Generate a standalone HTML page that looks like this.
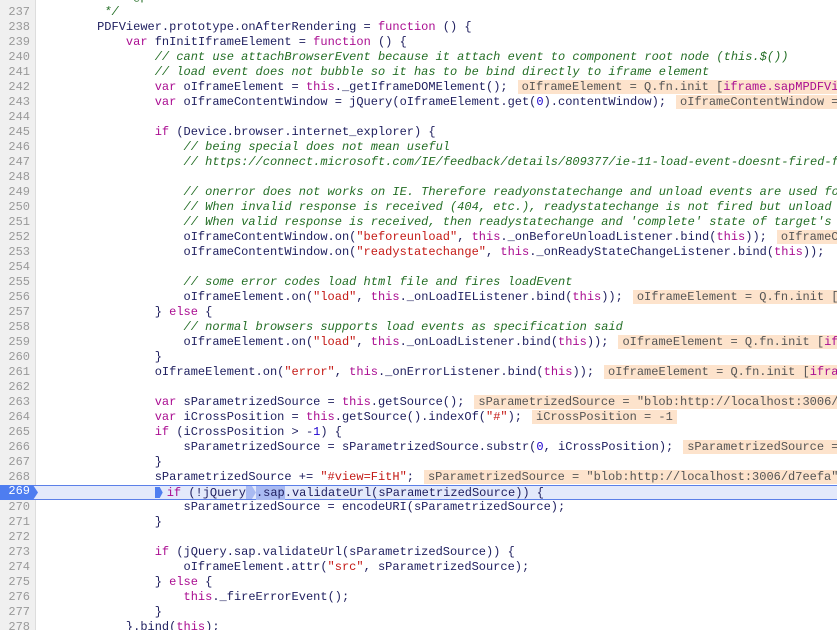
<!DOCTYPE html>
<html><head><meta charset="utf-8"><style>
html,body{margin:0;padding:0;width:837px;height:628px;overflow:hidden;background:#fff}
#ed{position:absolute;top:-10px;left:0;width:837px;height:640px;overflow:hidden}
.l{position:relative;height:15px;line-height:15px;font:12px "Liberation Mono",monospace;white-space:pre;color:#202060;overflow:hidden}
.g{position:absolute;left:0;top:0;width:36px;height:15px;background:#f0f0f0;border-right:1px solid #ddd;color:#999;text-align:right;box-sizing:border-box;padding-right:5px}
.t{position:absolute;left:39.5px;top:0}
.k{color:#aa0d91}.s{color:#c41a16}.n{color:#1c00cf}.c{color:#236e25;font-style:italic}
.v{background:#fde3cc;color:#555;padding:0 4px;margin-left:10px}
.cur{background:#e3e9fb;border-top:1px solid #5b7fe8;border-bottom:1px solid #5b7fe8;height:13px;line-height:13px;overflow:visible}
.cur .g{background:#f0f0f0;height:13px}
.arrow{position:absolute;left:0;top:-1px;width:38px;height:15px;background:#4e7df0;color:#fff;text-align:right;padding-right:8px;box-sizing:border-box;clip-path:polygon(0 0,33px 0,38px 50%,33px 100%,0 100%)}
.m{display:inline-block;width:8px;height:11px;background:#4e7df0;vertical-align:-2px;clip-path:polygon(0 0,5px 0,8px 50%,5px 100%,0 100%);margin-right:4px}
.m2{display:inline-block;width:10px;height:13px;background:#a9baf2;vertical-align:-3px;clip-path:polygon(0 0,6px 0,10px 50%,6px 100%,0 100%)}
.hl{background:#a9baf2}
</style></head><body><div id="ed">
<div class="l"><span class="g">236</span><span class="t">           <span style="color:#236e25">* @private</span></span></div>
<div class="l"><span class="g">237</span><span class="t c">         */</span></div>
<div class="l"><span class="g">238</span><span class="t">        PDFViewer.prototype.onAfterRendering = <span class="k">function</span> () {</span></div>
<div class="l"><span class="g">239</span><span class="t">            <span class="k">var</span> fnInitIframeElement = <span class="k">function</span> () {</span></div>
<div class="l"><span class="g">240</span><span class="t">                <span class="c">// cant use attachBrowserEvent because it attach event to component root node (this.$())</span></span></div>
<div class="l"><span class="g">241</span><span class="t">                <span class="c">// load event does not bubble so it has to be bind directly to iframe element</span></span></div>
<div class="l"><span class="g">242</span><span class="t">                <span class="k">var</span> oIframeElement = <span class="k">this</span>._getIframeDOMElement();<span class="v">oIframeElement = Q.fn.init [<span class="k">iframe.sapMPDFViewerContent</span>]</span></span></div>
<div class="l"><span class="g">243</span><span class="t">                <span class="k">var</span> oIframeContentWindow = jQuery(oIframeElement.get(<span class="n">0</span>).contentWindow);<span class="v">oIframeContentWindow = Window</span></span></div>
<div class="l"><span class="g">244</span><span class="t"></span></div>
<div class="l"><span class="g">245</span><span class="t">                <span class="k">if</span> (Device.browser.internet_explorer) {</span></div>
<div class="l"><span class="g">246</span><span class="t">                    <span class="c">// being special does not mean useful</span></span></div>
<div class="l"><span class="g">247</span><span class="t">                    <span class="c">// https://connect.microsoft.com/IE/feedback/details/809377/ie-11-load-event-doesnt-fired-for-pdf-in-iframe</span></span></div>
<div class="l"><span class="g">248</span><span class="t"></span></div>
<div class="l"><span class="g">249</span><span class="t">                    <span class="c">// onerror does not works on IE. Therefore readyonstatechange and unload events are used for error detection.</span></span></div>
<div class="l"><span class="g">250</span><span class="t">                    <span class="c">// When invalid response is received (404, etc.), readystatechange is not fired but unload is.</span></span></div>
<div class="l"><span class="g">251</span><span class="t">                    <span class="c">// When valid response is received, then readystatechange and 'complete' state of target's document is fired</span></span></div>
<div class="l"><span class="g">252</span><span class="t">                    oIframeContentWindow.on(<span class="s">"beforeunload"</span>, <span class="k">this</span>._onBeforeUnloadListener.bind(<span class="k">this</span>));<span class="v">oIframeContentWindow = Window</span></span></div>
<div class="l"><span class="g">253</span><span class="t">                    oIframeContentWindow.on(<span class="s">"readystatechange"</span>, <span class="k">this</span>._onReadyStateChangeListener.bind(<span class="k">this</span>));</span></div>
<div class="l"><span class="g">254</span><span class="t"></span></div>
<div class="l"><span class="g">255</span><span class="t">                    <span class="c">// some error codes load html file and fires loadEvent</span></span></div>
<div class="l"><span class="g">256</span><span class="t">                    oIframeElement.on(<span class="s">"load"</span>, <span class="k">this</span>._onLoadIEListener.bind(<span class="k">this</span>));<span class="v">oIframeElement = Q.fn.init [<span class="k">iframe.sapMPDFViewerContent</span>]</span></span></div>
<div class="l"><span class="g">257</span><span class="t">                } <span class="k">else</span> {</span></div>
<div class="l"><span class="g">258</span><span class="t">                    <span class="c">// normal browsers supports load events as specification said</span></span></div>
<div class="l"><span class="g">259</span><span class="t">                    oIframeElement.on(<span class="s">"load"</span>, <span class="k">this</span>._onLoadListener.bind(<span class="k">this</span>));<span class="v">oIframeElement = Q.fn.init [<span class="k">iframe.sapMPDFViewerContent</span>]</span></span></div>
<div class="l"><span class="g">260</span><span class="t">                }</span></div>
<div class="l"><span class="g">261</span><span class="t">                oIframeElement.on(<span class="s">"error"</span>, <span class="k">this</span>._onErrorListener.bind(<span class="k">this</span>));<span class="v">oIframeElement = Q.fn.init [<span class="k">iframe.sapMPDFViewerContent</span>]</span></span></div>
<div class="l"><span class="g">262</span><span class="t"></span></div>
<div class="l"><span class="g">263</span><span class="t">                <span class="k">var</span> sParametrizedSource = <span class="k">this</span>.getSource();<span class="v">sParametrizedSource = "blob:http://localhost:3006/d7eefa"</span></span></div>
<div class="l"><span class="g">264</span><span class="t">                <span class="k">var</span> iCrossPosition = <span class="k">this</span>.getSource().indexOf(<span class="s">"#"</span>);<span class="v">iCrossPosition = -1</span></span></div>
<div class="l"><span class="g">265</span><span class="t">                <span class="k">if</span> (iCrossPosition &gt; -<span class="n">1</span>) {</span></div>
<div class="l"><span class="g">266</span><span class="t">                    sParametrizedSource = sParametrizedSource.substr(<span class="n">0</span>, iCrossPosition);<span class="v">sParametrizedSource = "blob:http://localhost"</span></span></div>
<div class="l"><span class="g">267</span><span class="t">                }</span></div>
<div class="l"><span class="g">268</span><span class="t">                sParametrizedSource += <span class="s">"#view=FitH"</span>;<span class="v">sParametrizedSource = "blob:http://localhost:3006/d7eefa"</span></span></div>
<div class="l cur"><span class="arrow">269</span><span class="t" style="top:0">                <span class="m"></span><span class="k">if</span> (!jQuery<span class="m2"></span><span class="hl">.sap</span>.validateUrl(sParametrizedSource)) {</span></div>
<div class="l"><span class="g">270</span><span class="t">                    sParametrizedSource = encodeURI(sParametrizedSource);</span></div>
<div class="l"><span class="g">271</span><span class="t">                }</span></div>
<div class="l"><span class="g">272</span><span class="t"></span></div>
<div class="l"><span class="g">273</span><span class="t">                <span class="k">if</span> (jQuery.sap.validateUrl(sParametrizedSource)) {</span></div>
<div class="l"><span class="g">274</span><span class="t">                    oIframeElement.attr(<span class="s">"src"</span>, sParametrizedSource);</span></div>
<div class="l"><span class="g">275</span><span class="t">                } <span class="k">else</span> {</span></div>
<div class="l"><span class="g">276</span><span class="t">                    <span class="k">this</span>._fireErrorEvent();</span></div>
<div class="l"><span class="g">277</span><span class="t">                }</span></div>
<div class="l"><span class="g">278</span><span class="t">            }.bind(<span class="k">this</span>);</span></div>
</div></body></html>
